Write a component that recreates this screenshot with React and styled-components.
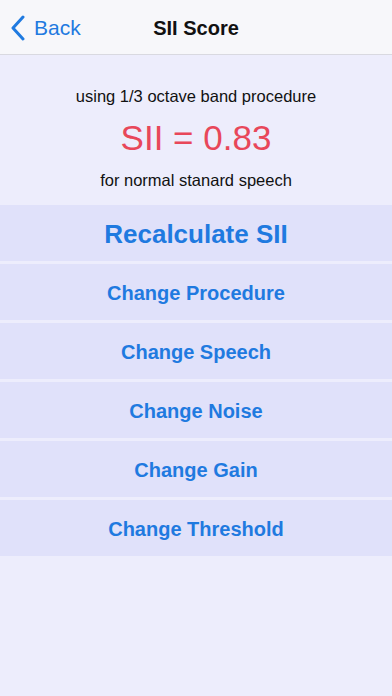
import styled, { createGlobalStyle } from "styled-components";

const GlobalStyle = createGlobalStyle`
  html, body {
    margin: 0;
    padding: 0;
    background: #ededfc;
    font-family: "Liberation Sans", Arial, sans-serif;
  }
`;

const Screen = styled.div`
  width: 392px;
  height: 696px;
  background: #ededfc;
  overflow: hidden;
`;

const NavBar = styled.div`
  height: 55px;
  background: #f7f7fa;
  border-bottom: 1px solid #d9d9e0;
  box-sizing: border-box;
  display: grid;
  grid-template-columns: 1fr auto 1fr;
  align-items: center;
  padding-top: 2px;
`;

const BackButton = styled.div`
  display: flex;
  align-items: center;
  gap: 9px;
  padding-left: 10px;
  color: #1f7ae0;
  font-size: 21px;
`;

const Title = styled.div`
  font-size: 20px;
  font-weight: bold;
  color: #111;
`;

const Summary = styled.div`
  display: flex;
  flex-direction: column;
  align-items: center;
  padding-top: 31px;
  height: 150px;
  box-sizing: border-box;
`;

const Note = styled.div`
  font-size: 16.5px;
  line-height: 20px;
  color: #111;
`;

const Score = styled.div`
  font-size: 35px;
  color: #e8475a;
  margin: 12px 0;
  line-height: 40px;
`;

const Menu = styled.div`
  display: flex;
  flex-direction: column;
  gap: 3px;
`;

const MenuRow = styled.div`
  height: 56px;
  background: #e0e1fa;
  display: flex;
  align-items: center;
  justify-content: center;
  color: #1f7ae0;
  font-weight: bold;
  font-size: ${(p) => (p.big ? "26px" : "20px")};
  padding-top: 2px;
  box-sizing: border-box;
`;

const items = ["Change Procedure", "Change Speech", "Change Noise", "Change Gain", "Change Threshold"];

export default function App() {
  return (
    <>
      <GlobalStyle />
      <Screen>
        <NavBar>
          <BackButton>
            <svg width="15" height="26" viewBox="0 0 15 26">
              <path d="M13 2 L3 13 L13 24" fill="none" stroke="#1f7ae0" strokeWidth="3" strokeLinecap="round" strokeLinejoin="round" />
            </svg>
            Back
          </BackButton>
          <Title>SII Score</Title>
          <div />
        </NavBar>
        <Summary>
          <Note>using 1/3 octave band procedure</Note>
          <Score>SII = 0.83</Score>
          <Note>for normal stanard speech</Note>
        </Summary>
        <Menu>
          <MenuRow big>Recalculate SII</MenuRow>
          {items.map((t) => (
            <MenuRow key={t}>{t}</MenuRow>
          ))}
        </Menu>
      </Screen>
    </>
  );
}
